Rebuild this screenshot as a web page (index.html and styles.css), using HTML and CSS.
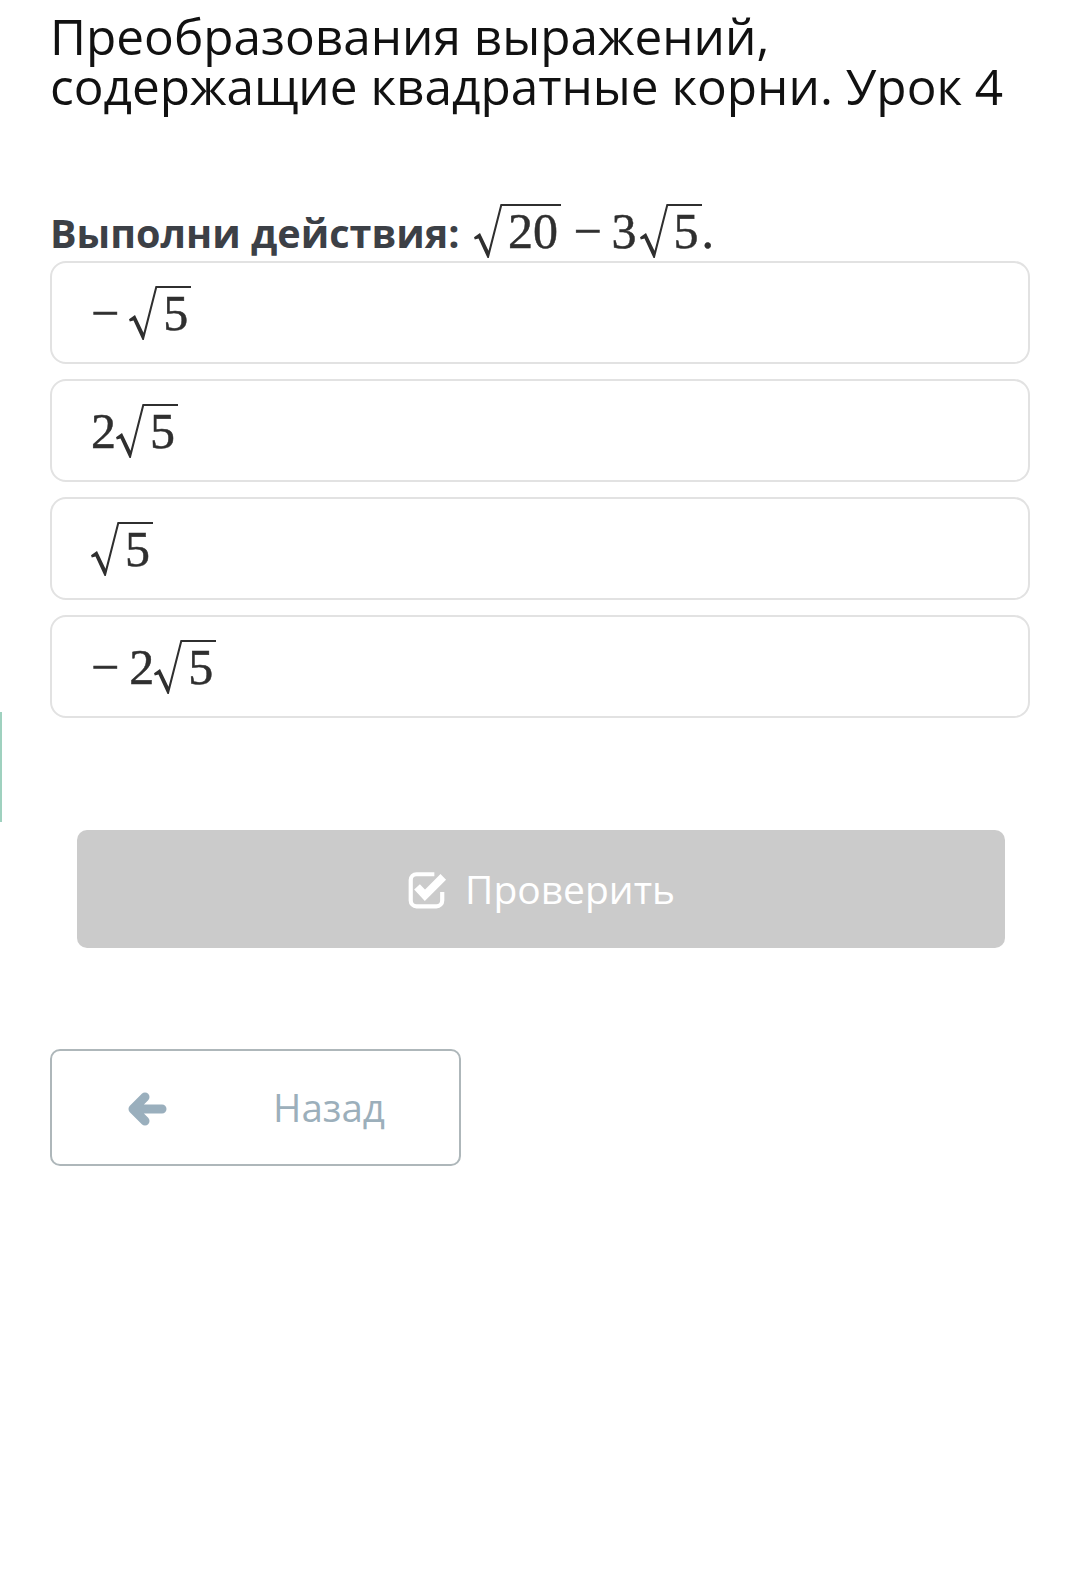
FILE: index.html
```html
<!DOCTYPE html>
<html lang="ru">
<head>
    <meta charset="UTF-8">
    <meta name="viewport" content="width=device-width, initial-scale=1.0">
    <title>Преобразования выражений, содержащие квадратные корни. Урок 4</title>
    <link rel="stylesheet" href="styles.css">
</head>
<body>
    <div class="side-tab"></div>
    <main class="page">
        <h1 class="title">Преобразования выражений, содержащие квадратные корни. Урок 4</h1>

        <div class="question">
            Выполни действия:
            <span class="math"><span class="sqrt"><svg class="surd" viewBox="0 0 28 52" preserveAspectRatio="none"><path d="M0 32 L6 28 L14.5 45 L26.5 0 L28 0 L28 2.2 L14.8 52 L13.5 52 L4.5 33.3 L0.8 34.2 Z"/></svg><span class="radicand">20</span></span><span class="bin">−</span>3<span class="sqrt"><svg class="surd" viewBox="0 0 28 52" preserveAspectRatio="none"><path d="M0 32 L6 28 L14.5 45 L26.5 0 L28 0 L28 2.2 L14.8 52 L13.5 52 L4.5 33.3 L0.8 34.2 Z"/></svg><span class="radicand">5</span></span>.</span>
        </div>

        <div class="options">
            <div class="option">
                <span class="math"><span class="neg">−</span><span class="sqrt"><svg class="surd" viewBox="0 0 28 52" preserveAspectRatio="none"><path d="M0 32 L6 28 L14.5 45 L26.5 0 L28 0 L28 2.2 L14.8 52 L13.5 52 L4.5 33.3 L0.8 34.2 Z"/></svg><span class="radicand">5</span></span></span>
            </div>
            <div class="option">
                <span class="math">2<span class="sqrt"><svg class="surd" viewBox="0 0 28 52" preserveAspectRatio="none"><path d="M0 32 L6 28 L14.5 45 L26.5 0 L28 0 L28 2.2 L14.8 52 L13.5 52 L4.5 33.3 L0.8 34.2 Z"/></svg><span class="radicand">5</span></span></span>
            </div>
            <div class="option">
                <span class="math"><span class="sqrt"><svg class="surd" viewBox="0 0 28 52" preserveAspectRatio="none"><path d="M0 32 L6 28 L14.5 45 L26.5 0 L28 0 L28 2.2 L14.8 52 L13.5 52 L4.5 33.3 L0.8 34.2 Z"/></svg><span class="radicand">5</span></span></span>
            </div>
            <div class="option">
                <span class="math"><span class="neg">−</span>2<span class="sqrt"><svg class="surd" viewBox="0 0 28 52" preserveAspectRatio="none"><path d="M0 32 L6 28 L14.5 45 L26.5 0 L28 0 L28 2.2 L14.8 52 L13.5 52 L4.5 33.3 L0.8 34.2 Z"/></svg><span class="radicand">5</span></span></span>
            </div>
        </div>

        <button class="check-btn" type="button">
            <svg class="check-icon" viewBox="0 0 38 40">
                <path d="M26 5 H9 a5.5 5.5 0 0 0 -5.5 5.5 V30 a5.5 5.5 0 0 0 5.5 5.5 H28 a5.5 5.5 0 0 0 5.5 -5.5 V22" fill="none" stroke="#fff" stroke-width="4"/>
                <path d="M9.5 17 L17 25 L34.5 7.5" fill="none" stroke="#fff" stroke-width="7.5"/>
            </svg>
            <span>Проверить</span>
        </button>

        <button class="back-btn" type="button">
            <svg class="back-icon" viewBox="0 0 40 36">
                <path d="M35 18 H9 M18 6 L6 18 L18 30" fill="none" stroke="#9aafbd" stroke-width="9" stroke-linecap="round" stroke-linejoin="round"/>
            </svg>
            <span>Назад</span>
        </button>
    </main>
</body>
</html>
```

FILE: styles.css
```css
body {
    margin: 0;
    font-family: "Open Sans", "Noto Sans", sans-serif;
    background: #fff;
    color: #111;
    min-height: 1595px;
}
.side-tab {
    position: absolute;
    left: 0;
    top: 712px;
    width: 2px;
    height: 110px;
    background: #9fd1bf;
}
.page {
    padding: 0 40px 0 50px;
}
.title {
    margin: 11px 0 0;
    font-size: 49.5px;
    line-height: 50px;
    font-weight: 400;
    color: #111;
}
.question {
    margin-top: 92px;
    font-size: 39.6px;
    line-height: 56px;
    font-weight: 700;
    color: #3c4046;
}
.math {
    font-family: "Liberation Serif", "Times New Roman", serif;
    font-size: 50px;
    font-weight: 400;
    color: #2f2f2f;
    -webkit-text-stroke: 0.5px #2f2f2f;
    white-space: nowrap;
}
.question .math {
    margin-left: 4px;
}
.sqrt {
    white-space: nowrap;
}
.surd {
    width: 0.56em;
    height: 1.08em;
    vertical-align: -0.2em;
    fill: #2f2f2f;
    margin-left: 0.06em;
}
.neg + .sqrt .surd,
.question .math > .sqrt:first-child .surd,
.option .math > .sqrt:first-child .surd {
    margin-left: 0;
}
.radicand {
    display: inline-block;
    line-height: 1;
    border-top: 2px solid #2f2f2f;
    padding: 0 0.06em 0 0.12em;
}
.bin {
    margin: 0 0.2em 0 0.25em;
}
.neg {
    margin-right: 0.2em;
}
.options {
    display: flex;
    flex-direction: column;
    gap: 15px;
}
.option {
    height: 103px;
    box-sizing: border-box;
    border: 2px solid #e2e2e2;
    border-radius: 16px;
    display: flex;
    align-items: center;
    padding-left: 39px;
    line-height: 56px;
}
.check-btn {
    display: flex;
    align-items: center;
    justify-content: center;
    gap: 18px;
    width: calc(100% - 52px);
    height: 118px;
    margin: 112px 0 0 27px;
    border: none;
    border-radius: 10px;
    background: #cbcbcb;
    color: #fff;
    font-family: "Open Sans", sans-serif;
    font-size: 39px;
    padding: 0 0 2px;
}
.check-icon {
    width: 40px;
    height: 42px;
    margin-top: 4px;
}
.back-btn {
    display: flex;
    align-items: center;
    width: 411px;
    height: 117px;
    margin-top: 101px;
    padding: 0 0 2px 75px;
    box-sizing: border-box;
    background: #fff;
    border: 2px solid #aeb7ba;
    border-radius: 10px;
    color: #9cafbb;
    font-family: "Open Sans", sans-serif;
    font-size: 38.5px;
}
.back-icon {
    width: 40px;
    height: 36px;
    margin: 4px 106px 0 0;
}
```
